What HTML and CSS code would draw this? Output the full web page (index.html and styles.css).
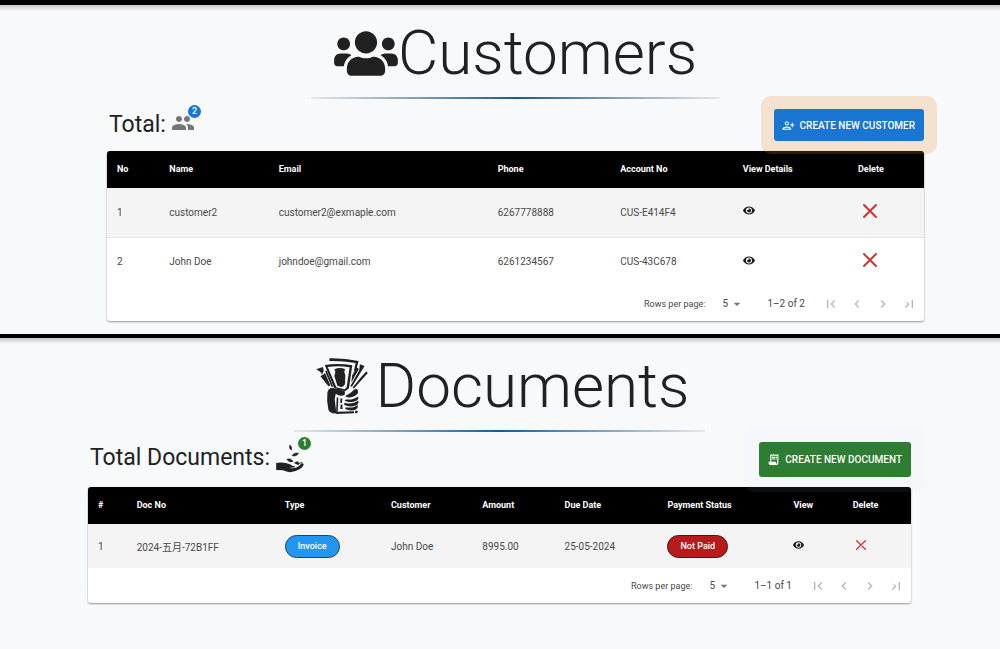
FILE: index.html
```html
<!DOCTYPE html>
<html lang="en">
<head>
<meta charset="utf-8">
<title>Customers and Documents</title>
<link rel="stylesheet" href="styles.css">
</head>
<body>
<svg class="sprite" aria-hidden="true">
  <symbol id="eye" viewBox="0 0 576 512"><path d="M572.52 241.4C518.29 135.59 410.93 64 288 64S57.68 135.64 3.48 241.41a32.35 32.35 0 0 0 0 29.19C57.71 376.41 165.07 448 288 448s230.32-71.64 284.52-177.41a32.35 32.35 0 0 0 0-29.19zM288 400a144 144 0 1 1 144-144 143.93 143.93 0 0 1-144 144zm0-240a95.31 95.31 0 0 0-25.31 3.79 47.85 47.85 0 0 1-66.9 66.9A95.78 95.78 0 1 0 288 160z"/></symbol>
  <symbol id="cross" viewBox="0 0 14 14"><path d="M1 1l12 12M13 1L1 13" fill="none" stroke="currentColor" stroke-width="1.9" stroke-linecap="round"/></symbol>
  <symbol id="caret" viewBox="0 0 24 24"><path d="M7 10l5 5 5-5z"/></symbol>
  <symbol id="first" viewBox="0 0 24 24"><path d="M18.41 16.59L13.82 12l4.59-4.59L17 6l-6 6 6 6zM6 6h2v12H6z"/></symbol>
  <symbol id="prev" viewBox="0 0 24 24"><path d="M15.41 16.59L10.83 12l4.58-4.59L14 6l-6 6 6 6z"/></symbol>
  <symbol id="next" viewBox="0 0 24 24"><path d="M8.59 16.59L13.17 12 8.59 7.41 10 6l6 6-6 6z"/></symbol>
  <symbol id="last" viewBox="0 0 24 24"><path d="M5.59 7.41L10.18 12l-4.59 4.59L7 18l6-6zM16 6h2v12h-2z"/></symbol>
</svg>

<section class="panel customers">
  <h1 class="title">
    <svg class="users" viewBox="0 0 640 512" aria-hidden="true"><path d="M96 224c35.300 0 64-28.700 64-64s-28.700-64-64-64-64 28.700-64 64 28.700 64 64 64zm448 0c35.300 0 64-28.700 64-64s-28.700-64-64-64-64 28.700-64 64 28.700 64 64 64zm32 32h-64c-17.600 0-33.500 7.100-45.100 18.600 40.300 22.100 68.900 62 75.100 109.400h66c17.700 0 32-14.300 32-32v-32c0-35.300-28.700-64-64-64zm-256 0c61.900 0 112-50.100 112-112S381.900 32 320 32 208 82.100 208 144s50.100 112 112 112zm76.800 32h-8.300c-20.800 10-43.900 16-68.500 16s-47.600-6-68.500-16h-8.300C179.600 288 128 339.600 128 403.200V432c0 26.500 21.500 48 48 48h288c26.500 0 48-21.500 48-48v-28.800c0-63.600-51.600-115.200-115.200-115.200zm-223.700-13.400C161.500 263.100 145.600 256 128 256H64c-35.300 0-64 28.700-64 64v32c0 17.700 14.300 32 32 32h65.900c6.300-47.400 34.900-87.300 75.200-109.400z"/></svg>
    <span>Customers</span>
  </h1>
  <div class="divider"></div>
  <div class="toolbar">
    <h2 class="total">Total:
      <span class="badged">
        <svg class="people" viewBox="0 0 24 24" aria-hidden="true"><path d="M16 11c1.660 0 2.990-1.340 2.990-3S17.660 5 16 5c-1.660 0-3 1.340-3 3s1.340 3 3 3zm-8 0c1.660 0 2.990-1.340 2.990-3S9.660 5 8 5C6.340 5 5 6.340 5 8s1.340 3 3 3zm0 2c-2.330 0-7 1.170-7 3.500V19h14v-2.500c0-2.330-4.670-3.500-7-3.500zm8 0c-.29 0-.62.02-.97.05 1.160.84 1.970 1.970 1.970 3.450V19h6v-2.500c0-2.330-4.670-3.500-7-3.500z"/></svg>
        <span class="badge">2</span>
      </span>
    </h2>
    <button type="button" class="create create-customer">
      <svg viewBox="0 0 24 24" aria-hidden="true"><path d="M13 8c0-2.210-1.790-4-4-4S5 5.790 5 8s1.790 4 4 4 4-1.790 4-4zm-2 0c0 1.100-.9 2-2 2s-2-.9-2-2 .9-2 2-2 2 .9 2 2zM1 18v2h16v-2c0-2.660-5.330-4-8-4s-8 1.340-8 4zm2 0c.2-.71 3.300-2 6-2 2.690 0 5.780 1.280 6 2H3zm17-3v-3h3v-2h-3V7h-2v3h-3v2h3v3h2z"/></svg>
      CREATE NEW CUSTOMER
    </button>
  </div>
  <div class="card">
    <table>
      <colgroup><col class="c-no"><col class="c-name"><col class="c-email"><col class="c-phone"><col class="c-account"><col class="c-details"><col></colgroup>
      <thead><tr><th>No</th><th>Name</th><th>Email</th><th>Phone</th><th>Account No</th><th>View Details</th><th>Delete</th></tr></thead>
      <tbody>
        <tr><td>1</td><td>customer2</td><td>customer2@exmaple.com</td><td>6267778888</td><td>CUS-E414F4</td>
          <td><button type="button" class="icon view" aria-label="View customer2"><svg><use href="#eye"/></svg></button></td>
          <td><button type="button" class="icon delete" aria-label="Delete customer2"><svg><use href="#cross"/></svg></button></td></tr>
        <tr><td>2</td><td>John Doe</td><td>johndoe@gmail.com</td><td>6261234567</td><td>CUS-43C678</td>
          <td><button type="button" class="icon view" aria-label="View John Doe"><svg><use href="#eye"/></svg></button></td>
          <td><button type="button" class="icon delete" aria-label="Delete John Doe"><svg><use href="#cross"/></svg></button></td></tr>
      </tbody>
    </table>
    <div class="pagination">
      <label for="rows-customers">Rows per page:</label>
      <span class="select"><select id="rows-customers"><option>5</option><option>10</option></select><svg><use href="#caret"/></svg></span>
      <span class="range">1–2 of 2</span>
      <div class="pages">
        <button type="button" disabled aria-label="First page"><svg><use href="#first"/></svg></button>
        <button type="button" disabled aria-label="Previous page"><svg><use href="#prev"/></svg></button>
        <button type="button" disabled aria-label="Next page"><svg><use href="#next"/></svg></button>
        <button type="button" disabled aria-label="Last page"><svg><use href="#last"/></svg></button>
      </div>
    </div>
  </div>
</section>

<section class="panel documents">
  <h1 class="title">
    <svg class="money" viewBox="18 20 156 172" aria-hidden="true">
      <path d="M58 21Q104 20 146 29L138 60L132 58L137 35Q98 28 58 29z"/>
      <path fill-rule="evenodd" d="M44 41Q84 34 127 42L117 111L105 120L72 110zM53 47L79 108L104 114L110 108L119 48Q86 42 53 47z"/>
      <path d="M73 54Q88 47 105 53L103 62L106 72L105 99Q98 111 91 107L82 104L73 74L76 62z"/>
      <path d="M18 54L38 47L41 58L36 70L31 62z"/><path d="M31 75L45 66L61 103L55 105z"/><path d="M45 60L50 58L69 105L65 108z"/>
      <path d="M150 39L164 44L126 107L121 105L148 57z"/><path d="M169 61L174 65L132 112L128 109L154 77z"/><path d="M140 48L147 53L124 94L127 72z"/>
      <path d="M61 111Q82 108 105 121L104 132Q89 138 77 128L74 145L79 187Q61 189 55 176Q49 149 52 123Q54 114 61 111z"/>
      <path d="M106 135Q122 127 134 114Q146 110 144 126Q137 136 118 139Q111 141 106 135z"/>
      <path d="M108 145Q131 147 145 136Q148 147 133 151Q117 155 104 149z"/><path d="M103 156Q131 160 145 148Q149 160 133 165Q117 168 103 162z"/><path d="M106 169Q133 172 143 162Q147 174 131 178Q116 180 106 174z"/>
      <path d="M80 139L85 139L83 182L132 181L132 187L78 189zM91 142L97 142L96 156L91 156zM92 160L97 160L98 174L91 174zM137 178L144 181L142 187L135 186z"/>
    </svg>
    <span>Documents</span>
  </h1>
  <div class="divider"></div>
  <div class="toolbar">
    <h2 class="total">Total Documents:
      <span class="badged">
        <svg class="hand" viewBox="20 38 86 90" aria-hidden="true">
          <path d="M20 98Q36 95 52 99Q61 101 70 107Q79 107 76 111L60 113Q78 116 88 107Q98 97 103 101Q102 109 91 116Q76 125 62 126Q51 125 40 120L20 119z"/>
          <path d="M61 44Q68 49 66 59Q58 57 61 44zM68 76Q73 66 87 69Q82 79 68 76zM52 87Q63 82 71 93Q59 99 52 87z" stroke="currentColor" stroke-width="2"/>
          <path d="M73 97L84 93L89 98L97 95L100 100L92 99L86 104L79 101z"/>
        </svg>
        <span class="badge">1</span>
      </span>
    </h2>
    <button type="button" class="create create-document">
      <svg viewBox="0 0 24 24" aria-hidden="true"><path d="M19.500 3.500L18 2l-1.500 1.500L15 2l-1.500 1.500L12 2l-1.500 1.500L9 2 7.500 3.500 6 2v14H3v3c0 1.660 1.340 3 3 3h12c1.660 0 3-1.340 3-3V2l-1.500 1.500zM19 19c0 .55-.45 1-1 1s-1-.45-1-1v-3H8V5h11v14zM9 7h6v2H9zm7 0h2v2h-2zm-7 3h6v2H9zm7 0h2v2h-2z"/></svg>
      CREATE NEW DOCUMENT
    </button>
  </div>
  <div class="card">
    <table>
      <colgroup><col class="d-no"><col class="d-doc"><col class="d-type"><col class="d-customer"><col class="d-amount"><col class="d-due"><col class="d-status"><col class="d-view"><col></colgroup>
      <thead><tr><th>#</th><th>Doc No</th><th>Type</th><th>Customer</th><th>Amount</th><th>Due Date</th><th>Payment Status</th><th>View</th><th>Delete</th></tr></thead>
      <tbody>
        <tr><td>1</td><td>2024-五月-72B1FF</td><td><span class="chip invoice">Invoice</span></td><td>John Doe</td><td>8995.00</td><td>25-05-2024</td><td><span class="chip unpaid">Not Paid</span></td>
          <td><button type="button" class="icon view" aria-label="View document"><svg><use href="#eye"/></svg></button></td>
          <td><button type="button" class="icon delete" aria-label="Delete document"><svg><use href="#cross"/></svg></button></td></tr>
      </tbody>
    </table>
    <div class="pagination">
      <label for="rows-documents">Rows per page:</label>
      <span class="select"><select id="rows-documents"><option>5</option><option>10</option></select><svg><use href="#caret"/></svg></span>
      <span class="range">1–1 of 1</span>
      <div class="pages">
        <button type="button" disabled aria-label="First page"><svg><use href="#first"/></svg></button>
        <button type="button" disabled aria-label="Previous page"><svg><use href="#prev"/></svg></button>
        <button type="button" disabled aria-label="Next page"><svg><use href="#next"/></svg></button>
        <button type="button" disabled aria-label="Last page"><svg><use href="#last"/></svg></button>
      </div>
    </div>
  </div>
</section>
</body>
</html>
```
FILE: styles.css
```css
* { box-sizing: border-box; }

body {
  margin: 0;
  background: #f8f9fb;
  color: #212121;
  font-family: Roboto, "Noto Sans CJK SC", sans-serif;
  font-size: 10px;
}

svg { display: block; fill: currentColor; flex: none; }
.sprite { display: none; }
button { font: inherit; border: 0; background: none; padding: 0; color: inherit; }

.panel {
  border-top: 5px solid #000;
  padding: 10px 76px 13px 107px;
  background: linear-gradient(#c4c5c7, #f8f9fb 6px);
}
.documents {
  border-top-width: 4px;
  padding: 10px 89px 45px 88px;
}

.title {
  display: flex;
  justify-content: center;
  align-items: center;
  margin: 0;
  font-size: 62px;
  line-height: 76px;
  font-weight: 300;
}
.documents .title { gap: 8px; }
.users { width: 64px; height: 51px; }
.money { width: 52px; height: 57px; margin-left: 6px; }

.divider {
  width: 50%;
  height: 2px;
  margin: 6px auto 0;
  background: linear-gradient(90deg, #e6e8ea, #1a5c8f 50%, #e6e8ea);
}

.toolbar {
  display: flex;
  justify-content: space-between;
  align-items: flex-start;
  padding: 10px 0 10px 2px;
}
.total {
  display: flex;
  align-items: center;
  gap: 6px;
  margin: 0;
  font-size: 23px;
  line-height: 32px;
  font-weight: 400;
}
.customers .total { gap: 5px; }
.badged { position: relative; }
.customers .badged { padding-bottom: 4px; }
.people { width: 24px; height: 24px; color: #757575; }
.hand { width: 29px; height: 30px; }
.badge {
  position: absolute;
  top: -6px;
  right: -6px;
  width: 13px;
  height: 13px;
  border-radius: 50%;
  background: #1976d2;
  color: #fff;
  font-size: 9px;
  line-height: 13px;
  font-weight: 500;
  text-align: center;
}
.documents .badge { background: #2e7d32; }

.create {
  position: relative;
  display: flex;
  align-items: center;
  gap: 5px;
  height: 32px;
  padding: 0 9px 0 8px;
  border-radius: 3px;
  color: #fff;
  font-size: 10px;
  font-weight: 500;
}
.create svg { width: 13px; height: 13px; }
.create-customer {
  background: #1976d2;
  box-shadow: 0 0 0 6px rgba(245, 225, 215, .3), 0 0 0 13px rgba(230, 135, 35, .2);
}
.create-document {
  height: 35px;
  background: #2e7d32;
  box-shadow: 0 0 0 15px rgba(210, 225, 250, .06);
}

.card {
  border-radius: 3px;
  overflow: hidden;
  background: #fff;
  box-shadow: 0 1px 2px rgba(0, 0, 0, .4);
}
table { width: 100%; table-layout: fixed; border-collapse: collapse; }
th, td { padding: 0 0 0 10px; text-align: left; white-space: nowrap; }
th { height: 37px; padding-bottom: 1px; background: #000; color: #fff; font-size: 9px; font-weight: 700; }
td { height: 49px; color: #484848; }
tbody tr:nth-child(odd) { background: #f4f4f4; }
.customers tbody tr + tr td { border-top: 1px solid #e4e4e4; }
.documents td { height: 44px; }

.c-no { width: 6.4%; }
.c-name { width: 13.4%; }
.c-email { width: 26.8%; }
.c-phone { width: 15%; }
.c-account { width: 15%; }
.c-details { width: 14.1%; }
.d-no { width: 4.7%; }
.d-doc { width: 18%; }
.d-type { width: 12.9%; }
.d-customer { width: 11.1%; }
.d-amount { width: 10%; }
.d-due { width: 12.5%; }
.d-status { width: 15.3%; }
.d-view { width: 7.2%; }

.icon { display: block; margin-bottom: 3px; }
.view svg { width: 12px; height: 11px; color: #1c1c1c; }
.delete { padding-left: 5px; color: #d32f2f; }
.delete svg { width: 14px; height: 14px; }
.documents .delete { padding-left: 3px; }
.documents .delete svg { width: 10px; height: 10px; }
.documents .view svg { width: 11px; height: 10px; }

.chip {
  display: inline-block;
  padding: 0 12px;
  border: 1px solid #24435c;
  border-radius: 12px;
  color: #fff;
  font-size: 9px;
  line-height: 21px;
  font-weight: 500;
}
.invoice { background: #2196f3; }
.unpaid { background: #b71c1c; border-color: #4a1515; }

.pagination {
  display: flex;
  justify-content: flex-end;
  align-items: center;
  height: 35px;
  padding-right: 2px;
  color: #484848;
}
.pagination label { font-size: 9px; }
.select { display: flex; align-items: center; margin: 0 22px 0 17px; }
.select select {
  appearance: none;
  width: 7px;
  padding: 0;
  border: 0;
  background: none;
  color: inherit;
  font: inherit;
}
.select svg { width: 16px; height: 16px; color: #757575; }
.pages { display: flex; margin-left: 13px; }
.pages button { padding: 5px; color: #b5b5b5; }
.pages svg { width: 16px; height: 16px; }
```
